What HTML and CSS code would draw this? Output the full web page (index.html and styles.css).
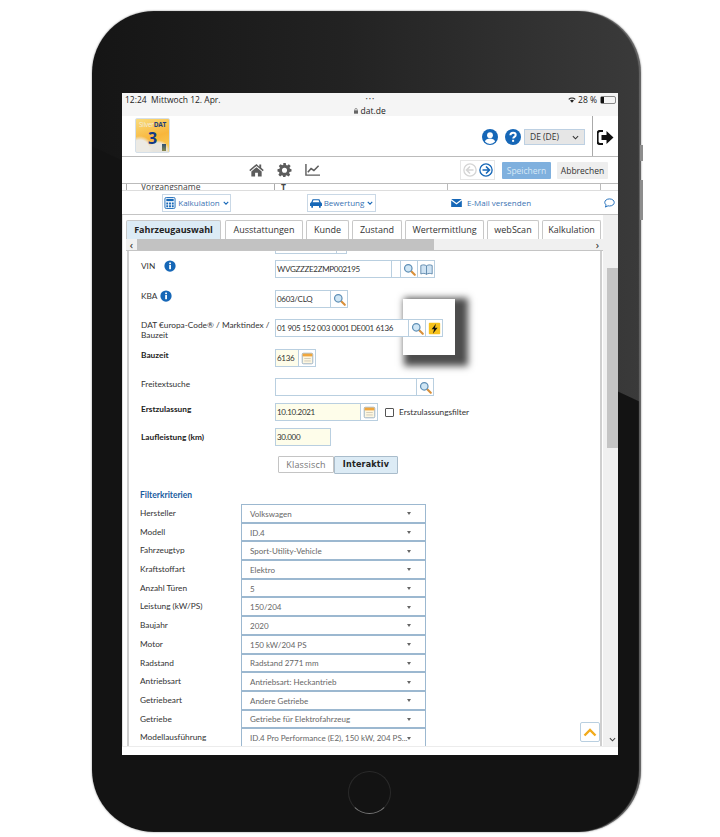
FILE: index.html
```html
<!DOCTYPE html>
<html>
  <head>
    <meta http-equiv="Content-Type" content="text/html;charset=utf-8" />
    <title>SilverDAT 3</title>
    <link rel="stylesheet" href="styles.css">
  </head>

  <body>
    <svg class="sprite" xmlns="http://www.w3.org/2000/svg">
      <symbol id="glass" viewBox="0 0 16 16">
        <line x1="9.500" y1="9.500" x2="14.500" y2="14.500" stroke="#d9903a" stroke-width="2.600" stroke-linecap="round"/>
        <circle cx="6.500" cy="6.500" r="4.600" fill="#cfe6f5" stroke="#5f8fb5" stroke-width="1.500"/>
      </symbol>
      <symbol id="calendar" viewBox="0 0 16 16">
        <rect x="1.500" y="1.500" width="13" height="13" rx="1.500" fill="#fdf6e0" stroke="#8aa4bb"/>
        <rect x="2" y="2" width="12" height="3.400" fill="#f0a63c"/>
        <path d="M4 8h8M4 11h8" stroke="#c9c3b0"/>
      </symbol>
      <symbol id="info" viewBox="0 0 16 16">
        <circle cx="8" cy="8" r="7.500" fill="#1667b7"/>
        <rect x="6.900" y="6.700" width="2.400" height="5.600" fill="#fff"/>
        <rect x="6.900" y="3.400" width="2.400" height="2.200" fill="#fff"/>
      </symbol>
    </svg>

    <div class="tablet">
      <div class="sideBtn sideBtnTop"></div>
      <div class="sideBtn sideBtnBottom"></div>

      <div class="screen">
        <div class="statusBar">
          <div class="statusLine">
            <span class="statusTime">12:24&nbsp;&nbsp;Mittwoch 12. Apr.</span>
            <span class="statusDots">•••</span>
            <span class="statusRight">
              <svg class="wifi" viewBox="0 0 12 9"><path d="M0.500 3a8 8 0 0 1 11 0l-1.200 1.200a6.300 6.300 0 0 0-8.600 0zM3 5.400a4.400 4.400 0 0 1 6 0L6 8.600z" fill="#222"/></svg>
              28 %
              <span class="battery"><span class="batteryFill"></span></span>
            </span>
          </div>
          <div class="urlLine">
            <svg class="lock" viewBox="0 0 6 8"><rect y="3" width="6" height="5" fill="#666"/><path d="M1.200 3V2a1.800 1.800 0 0 1 3.600 0v1" fill="none" stroke="#666"/></svg>
            dat.de
          </div>
        </div>

        <div class="header">
          <div class="logo">
            <span class="logoName">Silver<b>DAT</b></span>
            <span class="logoNum">3</span>
            <span class="logoThumb"></span>
          </div>
          <div class="headerRight">
            <svg class="roundIcon" viewBox="0 0 16 16">
              <circle cx="8" cy="8" r="8" fill="#1667b7"/>
              <circle cx="8" cy="6.200" r="2.900" fill="#fff"/>
              <path d="M2.900 12.600c.8-2.200 2.700-3 5.100-3s4.300.8 5.100 3a6.800 6.800 0 0 1-10.200 0z" fill="#fff"/>
            </svg>
            <svg class="roundIcon roundIconLast" viewBox="0 0 16 16">
              <circle cx="8" cy="8" r="8" fill="#1667b7"/>
              <path d="M5.400 6.200c0-1.600 1.200-2.500 2.700-2.500s2.600.9 2.600 2.200c0 1.900-2.500 1.900-2.500 3.500" fill="none" stroke="#fff" stroke-width="2"/>
              <rect x="7.100" y="10.800" width="2" height="2" fill="#fff"/>
            </svg>
            <div class="langSelect">
              <span>DE (DE)</span>
              <svg class="langArrow" viewBox="0 0 8 5"><path d="M1 1l3 3 3-3" fill="none" stroke="#333" stroke-width="1.200"/></svg>
            </div>
          </div>
          <div class="logoutCell">
            <svg class="logoutIcon" viewBox="0 0 17 15">
              <path d="M6 1H3a2.500 2.500 0 0 0-2.500 2.500v8A2.500 2.500 0 0 0 3 14h3" fill="none" stroke="#111" stroke-width="2.200"/>
              <path d="M9.500 1L16.500 7.500 9.500 14V10H4.500V5H9.500z" fill="#111"/>
            </svg>
          </div>
        </div>

        <div class="toolbar">
          <div class="toolIcons">
            <svg class="toolIcon" viewBox="0 0 16 14"><path d="M8 0.500L0.300 7l1 1.200L8 2.600l6.700 5.600 1-1.200-2.700-2.300V1h-2v2.500zM8 4L2.500 8.600V14h4V10h3v4h4V8.600z" fill="#5c5c5c"/></svg>
            <svg class="toolIcon" viewBox="0 0 16 16"><path d="M6.600 0h2.800l.4 2.200 1.300.6L13 1.500l2 2-1.300 1.900.6 1.300L16 7v2.800l-2.200.4-.6 1.300 1.300 1.900-2 2-1.900-1.300-1.300.6-.4 2.200H6.600l-.4-2.200-1.300-.6L3 15.400l-2-2 1.300-1.900-.6-1.300L0 9.800V7l2.200-.4.600-1.300L1.500 3.400l2-2 1.900 1.300 1.300-.6zM8 5.400A2.900 2.900 0 1 0 8 11.200 2.900 2.900 0 0 0 8 5.400z" fill="#5c5c5c" fill-rule="evenodd"/></svg>
            <svg class="toolIcon" viewBox="0 0 16 13"><path d="M1 0v12h15" fill="none" stroke="#5c5c5c" stroke-width="1.500"/><path d="M3 9l3.500-4 3 2L14.500 2" fill="none" stroke="#5c5c5c" stroke-width="1.600"/></svg>
          </div>
          <div class="toolRight">
            <div class="navGroup">
              <svg class="navIcon" viewBox="0 0 16 16"><circle cx="8" cy="8" r="7" fill="none" stroke="#d5d5d5" stroke-width="1.500"/><path d="M8 4L4 8l4 4M4.500 8H12" fill="none" stroke="#d5d5d5" stroke-width="1.800"/></svg>
              <svg class="navIcon" viewBox="0 0 16 16"><circle cx="8" cy="8" r="7" fill="none" stroke="#1667b7" stroke-width="1.500"/><path d="M8 4l4 4-4 4M11.500 8H4" fill="none" stroke="#1667b7" stroke-width="1.800"/></svg>
            </div>
            <div class="saveBtn">Speichern</div>
            <div class="cancelBtn">Abbrechen</div>
          </div>
        </div>

        <div class="cutRow">
          <span class="cutLabel">Vorgangsname</span>
          <span class="cutValue">T</span>
          <span class="cutRest"></span>
        </div>

        <div class="actionBar">
          <div class="actionBtn actionCalc">
            <svg class="actionIcon" viewBox="0 0 12 13"><rect x="0.500" y="0.500" width="11" height="12" rx="1.500" fill="none" stroke="#1667b7"/><rect x="2" y="2" width="8" height="2.500" fill="#1667b7"/><path d="M2 6h2v2H2zM5 6h2v2H5zM8 6h2v2H8zM2 9h2v2H2zM5 9h2v2H5zM8 9h2v2H8z" fill="#1667b7"/></svg>
            Kalkulation
            <svg class="actionArrow" viewBox="0 0 8 5"><path d="M1 1l3 3 3-3" fill="none" stroke="#1667b7" stroke-width="1.500"/></svg>
          </div>
          <div class="actionBtn actionRate">
            <svg class="actionIcon" viewBox="0 0 14 11"><path d="M3 1h8l1.500 3.500c.9.300 1.500 1 1.500 2V9h-1.500v2h-2V9h-7v2h-2V9H0V6.500c0-1 .6-1.700 1.500-2zM4 2.300L3 4.500h8l-1-2.200z" fill="#1667b7" fill-rule="evenodd"/></svg>
            Bewertung
            <svg class="actionArrow" viewBox="0 0 8 5"><path d="M1 1l3 3 3-3" fill="none" stroke="#1667b7" stroke-width="1.500"/></svg>
          </div>
          <div class="mailLink">
            <svg class="mailIcon" viewBox="0 0 12 9"><path d="M0 0h12L6 4.500zM0 1.800l6 4.500 6-4.500V9H0z" fill="#1667b7"/></svg>
            E-Mail versenden
          </div>
          <svg class="chatIcon" viewBox="0 0 12 11"><path d="M6 1C3 1 .8 2.700.8 4.900c0 1.100.6 2 1.500 2.700L1.500 10l2.900-1.400c.5.100 1 .2 1.600.2 3 0 5.200-1.700 5.200-3.900S9 1 6 1z" fill="none" stroke="#1667b7"/></svg>
        </div>

        <div class="main">
          <div class="mainLeft">
            <div class="tabs">
              <div class="tab tabActive tabW95">Fahrzeugauswahl</div>
              <div class="tab tabW78">Ausstattungen</div>
              <div class="tab tabW43">Kunde</div>
              <div class="tab tabW50">Zustand</div>
              <div class="tab tabW79">Wertermittlung</div>
              <div class="tab tabW52">webScan</div>
              <div class="tab tabW59">Kalkulation</div>
            </div>
            <div class="tabScroll">
              <span class="tabArrow">‹</span>
              <div class="tabThumb"></div>
              <span class="tabArrow tabArrowRight">›</span>
            </div>

            <div class="content">
              <div class="cutField"><div class="cutInput"></div><div class="cutBtn"></div></div>

              <div class="field gap12">
                <div class="fieldLabel">VIN <svg class="infoIcon infoVin"><use href="#info"/></svg></div>
                <div class="group">
                  <div class="input w117">WVGZZZE2ZMP002195</div>
                  <div class="addon addonThin"></div>
                  <div class="addon"><svg class="addonIcon"><use href="#glass"/></svg></div>
                  <div class="addon">
                    <svg class="addonIcon" viewBox="0 0 16 16"><path d="M1 3c2.500-1 5-1 7 .5C10 2 12.500 2 15 3v10.500c-2.500-1-5-1-7 .5-2-1.500-4.500-1.500-7-.5z" fill="#cfe3f3" stroke="#4f7da3"/><path d="M8 3.500V14" stroke="#4f7da3"/></svg>
                  </div>
                </div>
              </div>

              <div class="field gap11">
                <div class="fieldLabel">KBA <svg class="infoIcon"><use href="#info"/></svg></div>
                <div class="group">
                  <div class="input w56">0603/CLQ</div>
                  <div class="addon"><svg class="addonIcon"><use href="#glass"/></svg></div>
                </div>
              </div>

              <div class="field gap12">
                <div class="fieldLabel fieldLabelTwo">DAT €uropa-Code® / Marktindex / Bauzeit</div>
                <div class="group">
                  <div class="spotlight"></div>
                  <div class="input w134">01 905 152 003 0001 DE001 6136</div>
                  <div class="addon"><svg class="addonIcon"><use href="#glass"/></svg></div>
                  <div class="addon">
                    <svg class="addonIcon" viewBox="0 0 16 16"><rect x="1" y="1" width="14" height="14" rx="1" fill="#f7c21d"/><path d="M9.800 2L4.500 9h3l-1.500 5.500L11.800 7H8.500z" fill="#111"/></svg>
                  </div>
                </div>
              </div>

              <div class="field gap11">
                <div class="fieldLabel bold">Bauzeit</div>
                <div class="group">
                  <div class="input w24 cream">6136</div>
                  <div class="addon"><svg class="addonIcon"><use href="#calendar"/></svg></div>
                </div>
              </div>

              <div class="field gap7">
                <div class="fieldLabel">Freitextsuche</div>
                <div class="group">
                  <div class="input w142"></div>
                  <div class="addon"><svg class="addonIcon"><use href="#glass"/></svg></div>
                </div>
              </div>

              <div class="field gap7">
                <div class="fieldLabel bold">Erstzulassung</div>
                <div class="group">
                  <div class="input w86 cream">10.10.2021</div>
                  <div class="addon"><svg class="addonIcon"><use href="#calendar"/></svg></div>
                  <div class="checkWrap">
                    <span class="checkBox"></span>
                    Erstzulassungsfilter
                  </div>
                </div>
              </div>

              <div class="field gap10">
                <div class="fieldLabel fieldLabelLow bold">Laufleistung (km)</div>
                <div class="group">
                  <div class="input w56 cream">30.000</div>
                </div>
              </div>

              <div class="toggle">
                <div class="toggleBtn">Klassisch</div>
                <div class="toggleBtn toggleOn">Interaktiv</div>
              </div>

              <div class="filterTitle">Filterkriterien</div>

              <div class="filterGrid">
                <div class="filterLabel">Hersteller</div>
                <div class="select"><span>Volkswagen</span><i class="caret"></i></div>
                <div class="filterLabel">Modell</div>
                <div class="select"><span>ID.4</span><i class="caret"></i></div>
                <div class="filterLabel">Fahrzeugtyp</div>
                <div class="select"><span>Sport-Utility-Vehicle</span><i class="caret"></i></div>
                <div class="filterLabel">Kraftstoffart</div>
                <div class="select"><span>Elektro</span><i class="caret"></i></div>
                <div class="filterLabel">Anzahl Türen</div>
                <div class="select"><span>5</span><i class="caret"></i></div>
                <div class="filterLabel">Leistung (kW/PS)</div>
                <div class="select"><span>150/204</span><i class="caret"></i></div>
                <div class="filterLabel">Baujahr</div>
                <div class="select"><span>2020</span><i class="caret"></i></div>
                <div class="filterLabel">Motor</div>
                <div class="select"><span>150 kW/204 PS</span><i class="caret"></i></div>
                <div class="filterLabel">Radstand</div>
                <div class="select"><span>Radstand 2771 mm</span><i class="caret"></i></div>
                <div class="filterLabel">Antriebsart</div>
                <div class="select"><span>Antriebsart: Heckantrieb</span><i class="caret"></i></div>
                <div class="filterLabel">Getriebeart</div>
                <div class="select"><span>Andere Getriebe</span><i class="caret"></i></div>
                <div class="filterLabel">Getriebe</div>
                <div class="select"><span>Getriebe für Elektrofahrzeug</span><i class="caret"></i></div>
                <div class="filterLabel">Modellausführung</div>
                <div class="select"><span>ID.4 Pro Performance (E2), 150 kW, 204 PS...</span><i class="caret"></i></div>
              </div>

              <div class="toTop">
                <svg class="toTopIcon" viewBox="0 0 14 9"><path d="M1.500 7.500L7 2l5.500 5.500" fill="none" stroke="#f2ab1c" stroke-width="2.400"/></svg>
              </div>
            </div>
          </div>

          <div class="mainScroll">
            <div class="mainThumb"></div>
            <svg class="mainArrow" viewBox="0 0 8 5"><path d="M1 1l3 3 3-3" fill="none" stroke="#444" stroke-width="1.200"/></svg>
          </div>
        </div>

        <div class="screenFoot"></div>
      </div>

      <div class="homeBtn"></div>
    </div>
  </body>
</html>
```

FILE: styles.css
```css
html,
body {
  margin: 0;
  padding: 0;
  background: white;
}

body {
  font-family: "Open Sans", "Noto Sans", Arial, sans-serif;
  color: #333;
  height: 837px;
  overflow: hidden;
}

.sprite {
  display: none;
}

/* device */
.tablet {
  position: relative;
  box-sizing: border-box;
  width: 549px;
  height: 821px;
  margin: 11px 0 0 92px;
  padding: 82px 22px 0 30px;
  border-radius: 62px;
  background:
    linear-gradient(25deg, #131313 621px, transparent 622px),
    linear-gradient(90deg, #151515 0%, #222222 45%, #3a3a3a 100%);
  box-shadow: inset -2px 0 1px #666, 0 0 2px rgba(0, 0, 0, .5);
}

.sideBtn {
  position: absolute;
  left: 548px;
  width: 3px;
  background: #8d8d8d;
}

.sideBtnTop {
  top: 134px;
  height: 16px;
}

.sideBtnBottom {
  top: 169px;
  height: 40px;
}

.homeBtn {
  width: 43px;
  height: 43px;
  margin: 16px 0 0 226px;
  box-sizing: border-box;
  border-radius: 50%;
  border: 1px solid #2a2a2a;
  border-bottom-color: #777;
}

.screen {
  width: 496px;
  height: 662px;
  background: white;
  display: flex;
  flex-direction: column;
  overflow: hidden;
}

/* ios bar */
.statusBar {
  height: 23px;
  flex: none;
  background: #f5f5f5;
  color: #222;
  font-size: 8.5px;
  line-height: 11px;
}

.statusLine {
  display: flex;
  justify-content: space-between;
  align-items: center;
  padding: 1px 2px 0 3px;
  height: 11px;
  position: relative;
}

.statusTime {
  width: 160px;
}

.statusDots {
  font-size: 6px;
  letter-spacing: 1px;
  color: #555;
}

.statusRight {
  width: 160px;
  display: flex;
  justify-content: flex-end;
  align-items: center;
  gap: 2px;
}

.wifi {
  width: 8px;
  height: 6px;
}

.battery {
  display: block;
  width: 14px;
  height: 6px;
  border: 1px solid #888;
  border-radius: 2px;
  margin-left: 1px;
}

.batteryFill {
  display: block;
  width: 3px;
  height: 6px;
  background: #111;
}

.urlLine {
  text-align: center;
  font-size: 8.5px;
  line-height: 11px;
}

.lock {
  width: 4px;
  height: 6px;
}

/* header */
.header {
  height: 40px;
  flex: none;
  display: flex;
  align-items: flex-start;
  border-bottom: 1px solid #bbb;
}

.logo {
  position: relative;
  box-sizing: border-box;
  width: 35px;
  height: 35px;
  margin: 2px 0 0 13px;
  border: 1px solid #d5dfe8;
  border-radius: 2px;
  background:
    radial-gradient(circle at 4px 30px, #eceae4 0, #eceae4 9px, transparent 13px),
    radial-gradient(circle at 22px 33px, #e6e4de 0, #e6e4de 9px, transparent 12px),
    linear-gradient(160deg, #f9dc7c 0%, #f8b63c 55%, #f9d05c 100%);
  text-align: center;
  overflow: hidden;
}

.logoName {
  display: block;
  height: 9px;
  font-size: 6.5px;
  line-height: 9px;
  letter-spacing: -.3px;
  color: #f1ecdc;
  padding-top: 1px;
}

.logoName b {
  color: #1c3d7a;
}

.logoNum {
  display: block;
  margin-top: 1px;
  font-size: 16px;
  line-height: 17px;
  font-weight: bold;
  color: #123a86;
}

.logoThumb {
  position: absolute;
  right: 3px;
  bottom: 1px;
  width: 4px;
  height: 7px;
  background: linear-gradient(#2d4f78, #8a8a4a);
}

.headerRight {
  margin-left: auto;
  display: flex;
  align-items: center;
  height: 42px;
}

.roundIcon {
  width: 16px;
  height: 16px;
  margin-right: 7px;
}

.roundIconLast {
  margin-right: 3px;
}

.langSelect {
  box-sizing: border-box;
  width: 61px;
  height: 16px;
  padding: 0 5px;
  background: #e6e6e6;
  border: 1px solid #bdd0e2;
  font-size: 8.5px;
  line-height: 14px;
  display: flex;
  justify-content: space-between;
  align-items: center;
}

.langArrow {
  width: 7px;
  height: 5px;
}

.logoutCell {
  width: 26px;
  height: 40px;
  margin-left: 7px;
  border-left: 1px solid #aaa;
  display: flex;
  align-items: center;
  justify-content: center;
  box-sizing: border-box;
  padding-top: 2px;
}

.logoutIcon {
  width: 17px;
  height: 15px;
}

/* toolbar */
.toolbar {
  height: 27px;
  flex: none;
  display: flex;
  align-items: center;
  border-bottom: 1px solid #bbb;
  box-sizing: border-box;
  padding-right: 10px;
}

.toolIcons {
  display: flex;
  align-items: center;
  gap: 13px;
  margin-left: 127px;
}

.toolIcon {
  width: 15px;
  height: 14px;
}

.toolRight {
  margin-left: auto;
  display: flex;
  align-items: center;
}

.navGroup {
  box-sizing: border-box;
  width: 35px;
  height: 20px;
  border: 1px solid #e6e6e6;
  display: flex;
  align-items: center;
  justify-content: center;
  gap: 2px;
  margin-right: 7px;
}

.navIcon {
  width: 14px;
  height: 14px;
}

.saveBtn,
.cancelBtn {
  height: 17px;
  line-height: 17px;
  text-align: center;
  font-size: 8.5px;
  border-radius: 1px;
}

.saveBtn {
  width: 49px;
  background: #7fb0de;
  color: #d8e8f6;
  margin-right: 6px;
}

.cancelBtn {
  width: 51px;
  background: #eeeeee;
  color: #333;
}

.cutRow {
  height: 6px;
  flex: none;
  overflow: hidden;
  display: flex;
  background: white;
  border-bottom: 1px solid #ddd;
  font-size: 8.5px;
  line-height: 5px;
  color: #444;
}

.cutLabel {
  box-sizing: border-box;
  width: 149px;
  margin-left: 4px;
  padding-left: 14px;
  border-left: 1px solid #aaa;
  border-right: 1px solid #aaa;
}

.cutValue {
  box-sizing: border-box;
  width: 173px;
  padding-left: 6px;
  font-weight: bold;
  border-right: 1px solid #bbb;
}

.cutRest {
  width: 152px;
  border-right: 1px solid #bbb;
}

/* actions */
.actionBar {
  height: 24px;
  flex: none;
  display: flex;
  align-items: center;
  color: #3b73b3;
  font-size: 8px;
  border-bottom: 1px solid #c4c4c4;
  box-sizing: border-box;
}

.actionBtn {
  box-sizing: border-box;
  width: 69px;
  height: 18px;
  border: 1px solid #c9d8e6;
  display: flex;
  align-items: center;
  justify-content: center;
  gap: 2px;
}

.actionCalc {
  margin-left: 40px;
}

.actionRate {
  margin-left: 76px;
}

.actionIcon {
  width: 12px;
  height: 12px;
}

.actionArrow {
  width: 6px;
  height: 4px;
  margin-left: 1px;
}

.mailLink {
  display: flex;
  align-items: center;
  gap: 5px;
  margin-left: 75px;
}

.mailIcon {
  width: 11px;
  height: 8px;
}

.chatIcon {
  width: 11px;
  height: 10px;
  margin-left: auto;
  margin-right: 3px;
}

/* main part */
.main {
  flex: 1;
  display: flex;
  min-height: 0;
  background: #f0f0f0;
}

.mainLeft {
  width: 481px;
  display: flex;
  flex-direction: column;
  box-sizing: border-box;
  padding-left: 4px;
  background: white;
  border-left: 1px solid #e3e3e3;
}

.tabs {
  height: 24px;
  flex: none;
  display: flex;
  align-items: flex-end;
  gap: 3px;
  box-sizing: border-box;
  margin-left: -1px;
}

.tab {
  box-sizing: border-box;
  height: 19px;
  line-height: 18px;
  text-align: center;
  font-size: 9px;
  color: #333;
  border: 1px solid #c8c8c8;
  border-bottom: none;
  border-radius: 2px 2px 0 0;
  background: white;
  white-space: nowrap;
}

.tabActive {
  background: #dcebf5;
  font-weight: bold;
  color: #222;
  margin-right: 1px;
}

.tabW95 {
  width: 95px;
}

.tabW78 {
  width: 78px;
}

.tabW43 {
  width: 43px;
}

.tabW50 {
  width: 50px;
}

.tabW79 {
  width: 79px;
}

.tabW52 {
  width: 52px;
}

.tabW59 {
  width: 59px;
}

.tabScroll {
  height: 11px;
  flex: none;
  display: flex;
  align-items: center;
  background: #f0f0f0;
  border-bottom: 1px solid #c4c4c4;
  font-size: 11px;
  line-height: 10px;
  color: #222;
  margin-left: -1px;
}

.tabArrow {
  width: 11px;
  text-align: center;
  flex: none;
}

.tabArrowRight {
  margin-left: auto;
}

.tabThumb {
  width: 297px;
  height: 11px;
  flex: none;
  background: #c2c2c2;
}

.content {
  position: relative;
  flex: 1;
  min-height: 0;
  overflow: hidden;
  margin-right: 1px;
  padding-left: 12px;
  border-left: 2px solid #cfcfcf;
  border-right: 2px solid #cfcfcf;
  font-family: Lato, "Open Sans", sans-serif;
  font-size: 8.3px;
  background: white;
}

.cutField {
  height: 3px;
  margin-bottom: 6px;
  margin-left: 134px;
  display: flex;
  overflow: hidden;
}

.cutInput {
  box-sizing: border-box;
  width: 62px;
  height: 18px;
  margin-top: -15px;
  border: 1px solid #bcd0e0;
}

.cutBtn {
  box-sizing: border-box;
  width: 10px;
  height: 18px;
  margin-top: -15px;
  border: 1px solid #bcd0e0;
  border-left: none;
}

/* form rows */
.field {
  display: flex;
  height: 18px;
}

.gap7 {
  margin-bottom: 7px;
}

.gap10 {
  margin-bottom: 10px;
}

.gap11 {
  margin-bottom: 11px;
}

.gap12 {
  margin-bottom: 12px;
}

.fieldLabel {
  width: 134px;
  flex: none;
  line-height: 12px;
  color: #333;
  display: flex;
  align-items: flex-start;
  gap: 3px;
}

.fieldLabelLow {
  padding-top: 3px;
}

.fieldLabelTwo {
  display: block;
  width: 130px;
  margin-right: 4px;
  line-height: 10px;
  padding-top: 1px;
}

.bold {
  font-weight: bold;
  color: #222;
}

.infoIcon {
  width: 12px;
  height: 12px;
}

.infoVin {
  margin-left: 6px;
}

.group {
  position: relative;
  display: flex;
  align-items: stretch;
}

.input,
.addon {
  position: relative;
  box-sizing: border-box;
  border: 1px solid #b9cfe0;
}

.input {
  line-height: 16px;
  padding-left: 1px;
  font-size: 8px;
  letter-spacing: -.3px;
  color: #333;
  white-space: nowrap;
  overflow: hidden;
  background: white;
}

.cream {
  background: #fefdea;
}

.w24 {
  width: 24px;
}

.w56 {
  width: 56px;
}

.w86 {
  width: 86px;
}

.w117 {
  width: 117px;
}

.w134 {
  width: 134px;
}

.w142 {
  width: 142px;
}

.addon {
  width: 17px;
  border-left: none;
  display: flex;
  align-items: center;
  justify-content: center;
  background: white;
}

.addonThin {
  width: 9px;
}

.addonIcon {
  width: 13px;
  height: 13px;
}

/* the marked area */
.spotlight {
  position: absolute;
  left: 128px;
  top: -20px;
  width: 52px;
  height: 56px;
  background: white;
  box-shadow: 7px 5px 7px 6px #4c4c4c;
}

.checkWrap {
  display: flex;
  align-items: center;
  gap: 5px;
  margin-left: 7px;
  font-size: 8.3px;
  color: #333;
}

.checkBox {
  display: block;
  box-sizing: border-box;
  width: 9px;
  height: 9px;
  border: 1px solid #555;
  border-radius: 1px;
}

.toggle {
  display: flex;
  margin-left: 137px;
  height: 18px;
  font-family: "Open Sans", sans-serif;
  font-size: 9px;
  letter-spacing: .2px;
}

.toggleBtn {
  box-sizing: border-box;
  width: 56px;
  height: 17px;
  line-height: 15px;
  text-align: center;
  color: #777;
  border: 1px solid #c4c4c4;
  border-radius: 1px;
}

.toggleOn {
  width: 64px;
  height: 18px;
  font-family: "DejaVu Sans", sans-serif;
  font-size: 8px;
  font-weight: bold;
  color: #222;
  background: #dcebf5;
  border: 1px solid #a9bccb;
}

.filterTitle {
  margin: 15px 0 3px -1px;
  height: 12px;
  line-height: 12px;
  font-weight: bold;
  font-size: 8.5px;
  color: #1a5c9e;
}

.filterGrid {
  display: grid;
  grid-template-columns: 101px 185px;
  grid-auto-rows: 18.7px;
  margin-left: -1px;
}

.filterLabel {
  line-height: 19px;
  color: #333;
}

.select {
  box-sizing: border-box;
  border: 1px solid #9cb8d0;
  border-bottom-width: 1.500px;
  display: flex;
  align-items: center;
  justify-content: space-between;
  padding: 1px 14px 0 8px;
  font-size: 8px;
  color: #666;
  white-space: nowrap;
  background: white;
}

.caret {
  display: block;
  width: 0;
  height: 0;
  border-left: 2.500px solid transparent;
  border-right: 2.500px solid transparent;
  border-top: 3px solid #666;
}

.toTop {
  position: absolute;
  right: 0;
  bottom: 4px;
  box-sizing: border-box;
  width: 20px;
  height: 20px;
  background: white;
  border: 1px solid #b9cfe0;
  border-radius: 2px;
  display: flex;
  align-items: center;
  justify-content: center;
}

.toTopIcon {
  width: 14px;
  height: 9px;
}

.mainScroll {
  width: 15px;
  flex: none;
  display: flex;
  flex-direction: column;
  align-items: center;
  padding-top: 53px;
  box-sizing: border-box;
}

.mainThumb {
  width: 11px;
  height: 180px;
  margin-left: 3px;
  background: #c4c4c4;
}

.mainArrow {
  width: 7px;
  height: 5px;
  margin: auto 0 4px 3px;
}

.screenFoot {
  height: 8px;
  flex: none;
  border-top: 1px solid #ececec;
}
```
